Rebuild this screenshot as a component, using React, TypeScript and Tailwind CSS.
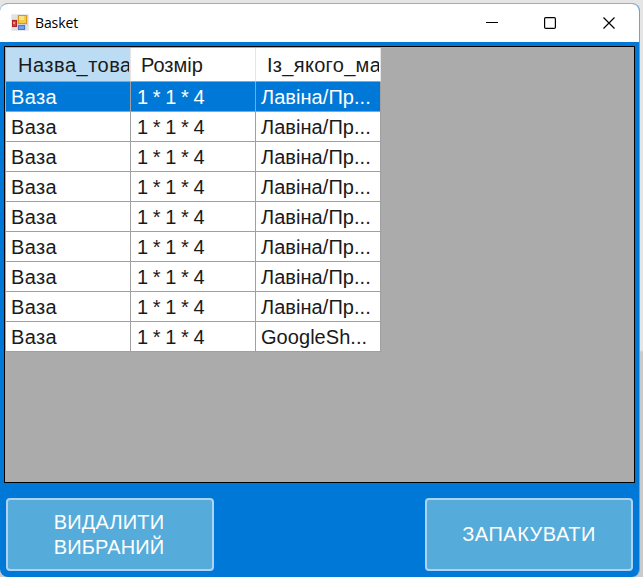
const rows = [
  'Лавіна/Пр...', 'Лавіна/Пр...', 'Лавіна/Пр...', 'Лавіна/Пр...', 'Лавіна/Пр...',
  'Лавіна/Пр...', 'Лавіна/Пр...', 'Лавіна/Пр...', 'GoogleSh...',
];

const cellStyles = [
  'pl-[5px] tracking-[0.4px]',
  'pl-[6px] tracking-[-0.45px]',
  'pl-[5px] tracking-[0.05px]',
];

function FormIcon() {
  return (
    <svg width="18" height="18" viewBox="0 0 18 18">
      <rect x="0.5" y="0.5" width="17" height="16" fill="#d3d3d7" />
      <path d="M1 1h5v4H1zM1 13h5v3H1zM15 11h2v5h-2z" fill="#e2e2e4" />
      <rect x="7.5" y="1.5" width="8" height="8" fill="#f5cb4c" stroke="#d39b18" />
      <rect x="8" y="2" width="5" height="4" fill="#fbe08a" />
      <rect x="1.5" y="6.5" width="4" height="6" fill="#d5433d" stroke="#ae2420" />
      <rect x="2" y="8" width="2" height="2" fill="#ee928c" />
      <rect x="7.5" y="11.5" width="6" height="4" fill="#6ba2eb" stroke="#4778ce" />
    </svg>
  );
}

function TitleBar() {
  return (
    <header className="flex h-[38px] items-center bg-white pl-[11px]">
      <FormIcon />
      <span className="ml-[6px] flex-1 font-['Open_Sans','Noto_Sans',sans-serif] text-[14px] leading-5 tracking-[-0.1px] text-black">
        Basket
      </span>
      <svg className="mr-[22px]" width="131" height="14" viewBox="0 0 131 14" fill="none" stroke="#000">
        <path d="M0 6.5h12" />
        <rect x="58.6" y="1.6" width="10.8" height="10.8" rx="1.2" strokeWidth="1.2" />
        <path d="M117.5 1.5l11 11m0-11l-11 11" strokeWidth="1.2" />
      </svg>
    </header>
  );
}

export default function App() {
  return (
    <div className="flex h-[577px] w-[643px] overflow-hidden bg-[linear-gradient(to_bottom,#e5e5e5_0,#e5e5e5_350px,#cbcbcb_352px,#cbcbcb_100%)] pt-[3px] font-['Liberation_Sans',Arial,sans-serif]">
      <div className="flex h-[574px] w-[640px] flex-col overflow-hidden rounded-[8px] border-t border-r border-t-[#aaa] border-r-[#68a5d5] bg-[#0078d7]">
        <TitleBar />
        <main className="ml-1 mt-1 h-[437px] w-[631px] border border-black bg-[#ababab]">
          <table className="ml-px mt-px w-[375px] table-fixed border-separate border-spacing-0 text-[20px] leading-6 text-[#1a1a1a]">
            <thead>
              <tr className="h-[34px]">
                <th className="border-r border-b border-[#e5e5e5] border-b-[#a0a0a0] bg-[#bcdcf4] p-0 text-left font-normal">
                  <div className="ml-[12px] w-[111px] overflow-hidden whitespace-nowrap tracking-[0.5px]">Назва_това</div>
                </th>
                <th className="border-r border-b border-[#e5e5e5] border-b-[#a0a0a0] bg-white p-0 text-left font-normal">
                  <div className="ml-[10px] whitespace-nowrap">Розмір</div>
                </th>
                <th className="border-r border-b border-[#e5e5e5] border-b-[#a0a0a0] bg-white p-0 text-left font-normal">
                  <div className="ml-[11px] w-[112px] overflow-hidden whitespace-nowrap tracking-[0.3px]">Із_якого_ма</div>
                </th>
              </tr>
            </thead>
            <tbody>
              {rows.map((shop, i) => (
                <tr key={i} className={i === 0 ? 'h-[30px] bg-[#0078d7] text-white' : 'h-[30px] bg-white'}>
                  {['Ваза', '1 * 1 * 4', shop].map((text, col) => (
                    <td key={col} className={`border-r border-b border-[#a0a0a0] py-0 pr-0 pt-px whitespace-nowrap ${cellStyles[col]}`}>
                      {text}
                    </td>
                  ))}
                </tr>
              ))}
            </tbody>
          </table>
        </main>
        <footer className="mt-[15px] flex justify-between pl-[6px] pr-[6px] text-[20px] leading-[25px] text-white">
          <button className="h-[73px] w-[208px] rounded-[4px] border-2 border-[#acd3f3] bg-[#55acda] pr-[2px] tracking-[0.15px]">
            ВИДАЛИТИ<br />ВИБРАНИЙ
          </button>
          <button className="h-[73px] w-[208px] rounded-[4px] border-2 border-[#acd3f3] bg-[#55acda] tracking-[0.5px]">
            ЗАПАКУВАТИ
          </button>
        </footer>
      </div>
    </div>
  );
}
